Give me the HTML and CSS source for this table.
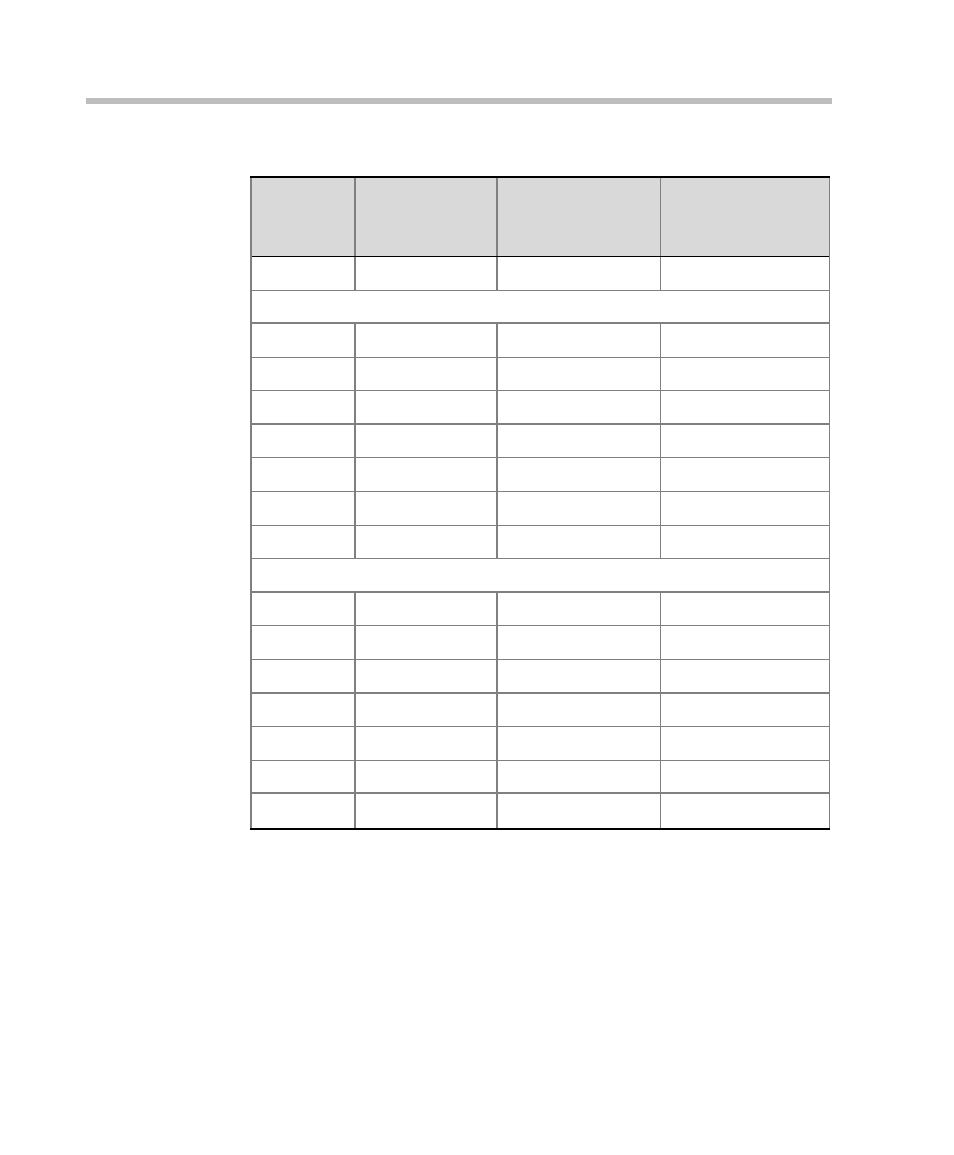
FILE: index.html
```html
<!DOCTYPE html>
<html lang="en">
<head>
<meta charset="utf-8">
<title>Table</title>
<link rel="stylesheet" href="styles.css">
</head>
<body>
<div class="page">
  <div class="top-rule"></div>
  <div class="table-wrap">
    <div class="table">
      <div class="row head"><div class="c c1"></div><div class="c c2"></div><div class="c c3"></div><div class="c c4"></div></div>
      <div class="row"><div class="c c1"></div><div class="c c2"></div><div class="c c3"></div><div class="c c4"></div></div>
      <div class="row span thick"><div class="c full"></div></div>
      <div class="row"><div class="c c1"></div><div class="c c2"></div><div class="c c3"></div><div class="c c4"></div></div>
      <div class="row"><div class="c c1"></div><div class="c c2"></div><div class="c c3"></div><div class="c c4"></div></div>
      <div class="row thick"><div class="c c1"></div><div class="c c2"></div><div class="c c3"></div><div class="c c4"></div></div>
      <div class="row"><div class="c c1"></div><div class="c c2"></div><div class="c c3"></div><div class="c c4"></div></div>
      <div class="row"><div class="c c1"></div><div class="c c2"></div><div class="c c3"></div><div class="c c4"></div></div>
      <div class="row"><div class="c c1"></div><div class="c c2"></div><div class="c c3"></div><div class="c c4"></div></div>
      <div class="row"><div class="c c1"></div><div class="c c2"></div><div class="c c3"></div><div class="c c4"></div></div>
      <div class="row span thick"><div class="c full"></div></div>
      <div class="row"><div class="c c1"></div><div class="c c2"></div><div class="c c3"></div><div class="c c4"></div></div>
      <div class="row"><div class="c c1"></div><div class="c c2"></div><div class="c c3"></div><div class="c c4"></div></div>
      <div class="row thick"><div class="c c1"></div><div class="c c2"></div><div class="c c3"></div><div class="c c4"></div></div>
      <div class="row"><div class="c c1"></div><div class="c c2"></div><div class="c c3"></div><div class="c c4"></div></div>
      <div class="row"><div class="c c1"></div><div class="c c2"></div><div class="c c3"></div><div class="c c4"></div></div>
      <div class="row thick"><div class="c c1"></div><div class="c c2"></div><div class="c c3"></div><div class="c c4"></div></div>
      <div class="row last"><div class="c c1"></div><div class="c c2"></div><div class="c c3"></div><div class="c c4"></div></div>
    </div>
  </div>
</div>
</body>
</html>
```

FILE: styles.css
```css
* { box-sizing: border-box; }
html, body {
  margin: 0;
  padding: 0;
  background: #ffffff;
  font-family: "Liberation Sans", Arial, sans-serif;
}
.page {
  width: 954px;
  height: 1155px;
  padding-top: 98px;
}
.top-rule {
  margin-left: 86px;
  width: 746px;
  height: 6px;
  background: #bdbdbd;
}
.table-wrap {
  margin-top: 72px;
  margin-left: 250px;
  width: 580px;
  border-top: 2px solid #000000;
  border-bottom: 2px solid #000000;
}
.table {
  display: flex;
  flex-direction: column;
  border-left: 2px solid #808080;
  border-right: 1px solid #808080;
}
.row {
  display: grid;
  grid-template-columns: 104px 142px 163px 168px;
  height: calc(571px / 17);
  border-bottom: 1px solid #808080;
}
.row.thick {
  border-bottom-width: 2px;
}
.row.head {
  height: 79px;
  background: #d9d9d9;
  border-bottom: 1px solid #000000;
}
.row.last {
  border-bottom: none;
}
.row.span {
  grid-template-columns: 1fr;
}
.c1, .c2 { border-right: 2px solid #808080; }
.c3 { border-right: 1px solid #808080; }
```
